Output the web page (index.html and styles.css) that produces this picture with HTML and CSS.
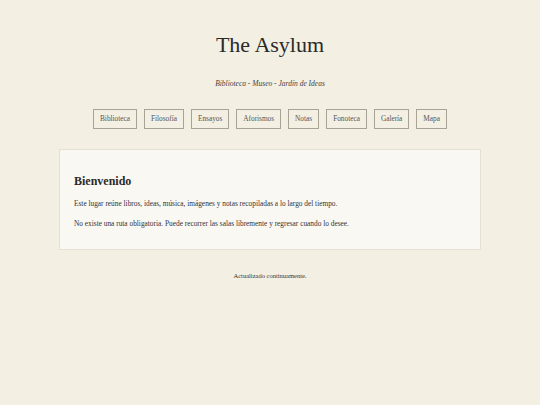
FILE: index.html
```html
<!DOCTYPE html>
<html lang="es">
<head>
<meta charset="utf-8">
<title>The Asylum</title>
<link rel="stylesheet" href="styles.css">
</head>
<body>
<header class="header">
  <h1 class="title">The Asylum</h1>
  <p class="subtitle">Biblioteca - Museo - Jardín de Ideas</p>
</header>
<nav class="nav">
  <a class="nav-link" href="#">Biblioteca</a>
  <a class="nav-link" href="#">Filosofía</a>
  <a class="nav-link" href="#">Ensayos</a>
  <a class="nav-link" href="#">Aforismos</a>
  <a class="nav-link" href="#">Notas</a>
  <a class="nav-link" href="#">Fonoteca</a>
  <a class="nav-link" href="#">Galería</a>
  <a class="nav-link" href="#">Mapa</a>
</nav>
<main class="card">
  <h2 class="card-title">Bienvenido</h2>
  <p class="card-text">Este lugar reúne libros, ideas, música, imágenes y notas recopiladas a lo largo del tiempo.</p>
  <p class="card-text">No existe una ruta obligatoria. Puede recorrer las salas libremente y regresar cuando lo desee.</p>
</main>
<footer class="footer">Actualizado continuamente.</footer>
</body>
</html>
```
FILE: styles.css
```css
html, body {
  margin: 0;
  padding: 0;
}
body {
  background: #f3efe3;
  color: #2b2b2b;
  font-family: "Liberation Serif", "DejaVu Serif", serif;
  width: 540px;
  min-height: 405px;
}
.header {
  text-align: center;
  padding-top: 31px;
}
.title {
  margin: 0;
  font-size: 22px;
  font-weight: normal;
  line-height: 28px;
  color: #2a2a2a;
}
.subtitle {
  margin: 20px 0 0;
  font-size: 7.5px;
  font-style: italic;
  line-height: 10px;
  color: #444;
}
.nav {
  display: flex;
  justify-content: center;
  gap: 7px;
  margin-top: 20px;
}
.nav-link {
  display: block;
  border: 1px solid #a8a495;
  padding: 0 6px;
  height: 18px;
  line-height: 18px;
  font-size: 7.3px;
  color: #555;
  text-decoration: none;
}
.card {
  display: block;
  margin: 20px 59px 0 59px;
  background: #faf8f3;
  border: 1px solid #e6e0d2;
  padding: 24px 14px 18px;
  height: 57px;
}
.card-title {
  margin: 0;
  font-size: 12px;
  font-weight: bold;
  line-height: 14px;
  color: #2a2a2a;
}
.card-text {
  margin: 11px 0 0;
  font-size: 7.35px;
  line-height: 10px;
  color: #333;
}
.card-text + .card-text {
  margin-top: 10px;
}
.footer {
  text-align: center;
  font-size: 6.5px;
  margin-top: 22px;
  color: #333;
}
```
